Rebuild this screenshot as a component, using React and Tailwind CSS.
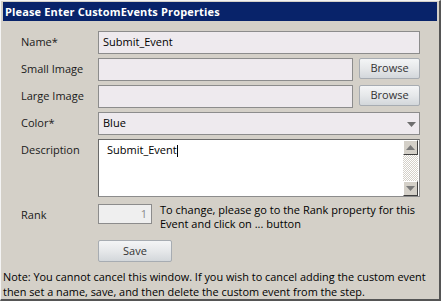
const font = { fontFamily: '"Open Sans", "DejaVu Sans", sans-serif' };

const Label = ({ children }) => (
  <div className="w-[96px] shrink-0 pl-[19px] pt-[3px] text-[11px] leading-[15px] text-[#1a1a1a] whitespace-nowrap">{children}</div>
);

const TextBox = ({ value, className = '' }) => (
  <div className={`h-[23px] border border-[#8c8c8c] bg-[#eeeaee] pl-[4px] flex items-center text-[11px] text-black ${className}`}>
    {value}
  </div>
);

const Button = ({ children, className = '' }) => (
  <div
    className={`flex items-center justify-center rounded-[2px] border border-[#a7acb2] bg-gradient-to-b from-[#f4f5f6] via-[#e6e8ea] to-[#d3d7db] text-[11px] text-[#333] ${className}`}
  >
    {children}
  </div>
);

const ScrollBtn = ({ up }) => (
  <div className="h-[15px] w-[15px] flex items-center justify-center bg-[#d4d0c8] border-t border-l border-t-white border-l-white border-r border-b border-r-[#404040] border-b-[#404040]">
    <svg width="9" height="5" viewBox="0 0 9 5">
      {up ? <polygon points="4.5,0 9,5 0,5" fill="#7a7a7a" /> : <polygon points="0,0 9,0 4.5,5" fill="#7a7a7a" />}
    </svg>
  </div>
);

export default function App() {
  return (
    <div style={font} className="w-[441px] h-[301px] bg-[#d4d0c8] border-t border-l border-t-[#f4f4f4] border-l-[#f4f4f4] border-r-2 border-b-2 border-r-[#555] border-b-[#555] p-[1px] flex flex-col overflow-hidden">
      <div className="h-[19px] mx-[1px] bg-[#08236a] text-white font-bold text-[11px] tracking-[0.15px] leading-[19px] pl-[2px] whitespace-nowrap">
        Please Enter CustomEvents Properties
      </div>

      <div className="flex flex-col pt-[10px]">
        <div className="flex">
          <Label>Name*</Label>
          <TextBox value="Submit_Event" className="w-[322px]" />
        </div>

        <div className="flex mt-[4px]">
          <Label>Small Image</Label>
          <TextBox value="" className="w-[255px]" />
          <Button className="ml-[6px] w-[61px] h-[21px]">Browse</Button>
        </div>

        <div className="flex mt-[4px]">
          <Label>Large Image</Label>
          <TextBox value="" className="w-[255px]" />
          <Button className="ml-[6px] w-[61px] h-[21px]">Browse</Button>
        </div>

        <div className="flex mt-[4px]">
          <Label>Color*</Label>
          <div className="relative">
            <TextBox value="Blue" className="w-[322px]" />
            <svg className="absolute right-[4px] top-[10px]" width="9" height="5" viewBox="0 0 9 5">
              <polygon points="0,0 9,0 4.5,5" fill="#6e6e6e" />
            </svg>
          </div>
        </div>

        <div className="flex mt-[4px]">
          <Label>Description</Label>
          <div className="w-[322px] h-[58px] border border-[#8c8c8c] border-t-[#6a6a6a] border-l-[#6a6a6a] bg-white flex">
            <div className="flex-1 pl-[8px] pt-[2px] text-[11px] leading-[15px] text-black">
              Submit_Event<span className="inline-block w-[1px] h-[12px] bg-black align-middle" />
            </div>
            <div className="w-[15px] flex flex-col mr-[1px]">
              <ScrollBtn up />
              <div className="flex-1 bg-[repeating-conic-gradient(#d4d0c8_0_25%,#ffffff_0_50%)] bg-[length:2px_2px]" />
              <ScrollBtn />
            </div>
          </div>
        </div>

        <div className="flex mt-[7px] h-[20px]">
          <Label>Rank</Label>
          <div className="w-[54px] h-[20px] border border-[#8c8c8c] bg-[#efefef] text-[11px] text-[#8a8a8a] flex items-center justify-end pr-[4px]">
            1
          </div>
          <div className="ml-[8px] -mt-[1px] text-[11px] leading-[14px] text-black whitespace-nowrap">
            To change, please go to the Rank property for this
            <br />
            Event and click on ... button
          </div>
        </div>

        <div className="flex mt-[16px]">
          <div className="w-[96px] shrink-0" />
          <Button className="w-[74px] h-[22px]">Save</Button>
        </div>

        <div className="mt-[7px] pl-[1px] text-[10.9px] leading-[15px] text-black whitespace-nowrap">
          Note: You cannot cancel this window. If you wish to cancel adding the custom event
          <br />
          then set a name, save, and then delete the custom event from the step.
        </div>
      </div>
    </div>
  );
}
